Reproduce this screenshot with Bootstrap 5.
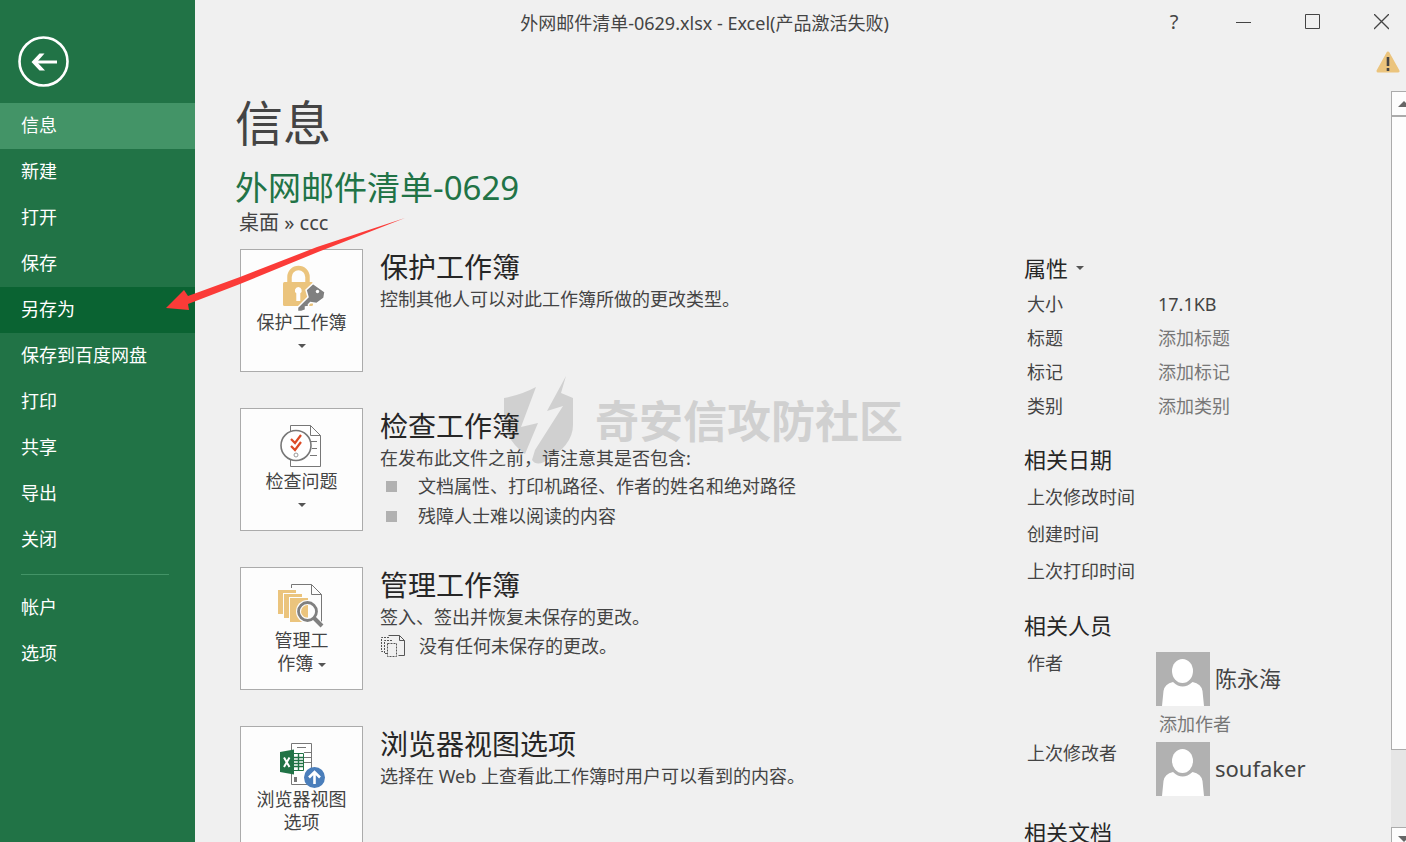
<!DOCTYPE html>
<html lang="zh-CN">
<head>
<meta charset="utf-8">
<meta name="viewport" content="width=device-width, initial-scale=1">
<title>外网邮件清单-0629.xlsx - Excel</title>
<link href="https://cdn.jsdelivr.net/npm/bootstrap@5.3.0/dist/css/bootstrap.min.css" rel="stylesheet">
<style>
body{font-family:"Noto Sans","Noto Sans CJK SC",sans-serif;font-size:18px;line-height:26px;color:#444;background:#f0f0f0}
button{font-family:inherit}
.sidebar{width:195px;background:#217346}
.back-btn{margin:36px 0 16px 18px;width:51px;height:51px}
.side-nav .nav-link{color:#fff;line-height:44px;padding:0 0 2px 21px;border-radius:0}
.side-nav .nav-link.active{background:#439467}
.side-nav .nav-link.hovered{background:#0a6332}
.side-nav hr{margin:11px 26px 10px 21px;border-color:#439467;opacity:1}
.win-title{line-height:46px;padding-left:3px;pointer-events:none}
.win-bar{height:46px;gap:19px}
.win-bar button{width:50px;height:44px;font-size:20px;color:#444}
.warn-bar{height:45px;padding:5px 6px 0 0}
.page-body{padding-left:40px}
h1{font-size:48px;line-height:64px;font-weight:400;color:#444}
.doc-name{font-size:33px;line-height:42px;font-weight:400;color:#217346;margin-top:12px}
.doc-path{font-size:20px;line-height:28px;padding-left:4px;margin-bottom:12px}
.actions{gap:36px;padding-left:5px}
.action{gap:17px;min-height:123px}
.tile{width:123px;height:123px;background:#fdfdfd;border:1px solid #ababab;padding:13px 10px 0;line-height:23px;color:#444}
.action h3{font-size:28px;line-height:37px;font-weight:400;color:#262626}
.bullets li{line-height:30px;gap:21px;padding-left:6px}
.bullets li::before{content:"";width:11px;height:11px;background:#b1b1b1}
.unsaved{line-height:32px;gap:12px}
.props{width:367px}
.props h4,.props .prop-head{font-size:22px;line-height:38px;font-weight:400;color:#262626}
.props h4{margin-top:17px}
.props table{width:100%}
.props th{width:131px;font-weight:400;padding:0 0 0 3px}
.props td{padding:0 0 0 3px}
.size-rows tr{height:34px}
.date-rows tr{height:37px}
.props input{border:0;background:transparent;padding:0;width:180px;height:26px;color:#444}
.props input::placeholder{color:#777;opacity:1}
.person-label{width:132px;padding-left:3px;line-height:22px}
.person-name{font-size:22px;line-height:30px;padding:0 0 2px 5px}
.people{padding-top:8px}
.add-author{height:36px;padding-left:135px}
.scroller{width:15px;background:#e6e6e6}
.scroller button{height:25px;background:#fdfdfd;border:1px solid #ababab;border-right:0;padding:0 0 0 6px}
.scroller .thumb{background:#fdfdfd;border:1px solid #ababab;border-right:0}
.scroller .track{height:77px}
.scroller .down{height:15px;border-bottom:0}
.stamp{left:308px;top:374px;color:#d0d0d0;font-size:44px;line-height:94px;font-weight:700;gap:20px}
.pointer{left:160px;top:212px;pointer-events:none}
</style>
</head>
<body>
<div class="d-flex vh-100 overflow-hidden position-relative">
  <aside class="sidebar flex-shrink-0">
    <button class="back-btn btn p-0 border-0 d-block" type="button" aria-label="返回">
      <svg class="d-block" width="51" height="51" viewBox="0 0 51 51" fill="none" stroke="#fff"><circle cx="25.500" cy="25.500" r="24" stroke-width="2.600"/><path d="M39 26H16" stroke-width="3"/><path d="M21.500 17.500h5L19 26l8 8.500h-5.500L13.500 26z" fill="#fff" stroke="none"/></svg>
    </button>
    <nav class="side-nav nav flex-column">
      <a class="nav-link active" href="#">信息</a>
      <a class="nav-link" href="#">新建</a>
      <a class="nav-link" href="#">打开</a>
      <a class="nav-link" href="#">保存</a>
      <a class="nav-link hovered" href="#">另存为</a>
      <a class="nav-link" href="#">保存到百度网盘</a>
      <a class="nav-link" href="#">打印</a>
      <a class="nav-link" href="#">共享</a>
      <a class="nav-link" href="#">导出</a>
      <a class="nav-link" href="#">关闭</a>
      <hr>
      <a class="nav-link" href="#">帐户</a>
      <a class="nav-link" href="#">选项</a>
    </nav>
  </aside>

  <div class="win-title position-absolute top-0 start-0 w-100 text-center">外网邮件清单-0629.xlsx - Excel(产品激活失败)</div>

  <main class="flex-grow-1 d-flex flex-column position-relative overflow-hidden">
    <div class="stamp position-absolute d-flex text-nowrap">
      <svg width="72" height="94" viewBox="0 0 72 94" fill="#d0d0d0"><path d="M1 24Q18 21 33 13L18 53l17-4-13 31Q1 65 1 41zM63 2L44 37l16-5-28 44-3 10q4 6 12 2Q70 72 70 51V24l-12-5z"/></svg>
      <span>奇安信攻防社区</span>
    </div>
    <div class="win-bar d-flex justify-content-end flex-shrink-0">
      <button class="btn border-0 p-0" type="button" aria-label="帮助">?</button>
      <button class="btn border-0 p-0" type="button" aria-label="最小化"><svg class="d-block mx-auto" width="15" height="16"><path d="M0 8.500h15" stroke="#444"/></svg></button>
      <button class="btn border-0 p-0" type="button" aria-label="最大化"><svg class="d-block mx-auto" width="15" height="16"><path d="M.5.500h14v14H.5z" fill="none" stroke="#444"/></svg></button>
      <button class="btn border-0 p-0" type="button" aria-label="关闭"><svg class="d-block mx-auto" width="15" height="16"><path d="M0 0l15 15M15 0L0 15" fill="none" stroke="#444" stroke-width="1.300"/></svg></button>
    </div>
    <div class="warn-bar d-flex justify-content-end flex-shrink-0">
      <svg width="24" height="22" viewBox="0 0 24 22"><path d="M12 2L22 20H2z" fill="#ebc47d" stroke="#ebc47d" stroke-width="3" stroke-linejoin="round"/><path d="M12 6v9M12 17v3" stroke="#444" stroke-width="2.600"/></svg>
    </div>

    <div class="d-flex flex-grow-1 overflow-hidden">
      <div class="page-body flex-grow-1 overflow-hidden position-relative">
        <h1 class="m-0">信息</h1>
        <h2 class="doc-name mb-0">外网邮件清单-0629</h2>
        <div class="doc-path">桌面 » ccc</div>
        <div class="d-flex">
          <div class="actions flex-grow-1 d-flex flex-column">
            <section class="action d-flex">
              <button class="tile flex-shrink-0 d-flex flex-column align-items-center justify-content-start" type="button">
                <svg class="flex-shrink-0" width="49" height="48" viewBox="0 0 49 48"><path d="M12.500 20v-6a9 9 0 0 1 18 0v6" fill="none" stroke="#ebc47d" stroke-width="4.500"/><rect x="6" y="19" width="30" height="24" rx="1.500" fill="#ebc47d"/><path d="M21.300 24a3.500 3.500 0 0 1 2 6.300V38h-4v-7.700a3.500 3.500 0 0 1 2-6.300z" fill="#fff"/><path d="M36 20.500l12 8.500-1 6-7.500 5.500-6-1-2 2v2l-3 .5v3l-4 1.500h-4v-4L31 34l-2-7z" fill="#808080" stroke="#fff" stroke-width="1.500"/><circle cx="40.500" cy="28.500" r="1.700" fill="#fff"/></svg>
                <span class="text-nowrap">保护工作簿</span>
                <svg class="flex-shrink-0" width="8" height="23"><path d="M0 10h8L4 14z" fill="#555"/></svg>
              </button>
              <div><h3 class="m-0">保护工作簿</h3><div>控制其他人可以对此工作簿所做的更改类型。</div></div>
            </section>
            <section class="action d-flex">
              <button class="tile flex-shrink-0 d-flex flex-column align-items-center justify-content-start" type="button">
                <svg class="flex-shrink-0" width="49" height="48" viewBox="0 0 49 48" fill="none" stroke="#777"><path d="M13.500 3.500h20l10 10v31h-30zM33.500 3.500v10h10" fill="#fff"/><path d="M34 19.500h6M35 26.500h5M33 33.500h7"/><circle cx="19" cy="23.500" r="15" fill="#fff" stroke-width="1.600"/><path d="M14 17l4 4 6-8M14 24l4 4 6-8" stroke="#dc4a26" stroke-width="2.200"/><circle cx="19" cy="33" r="2" stroke="#999"/></svg>
                <span class="text-nowrap">检查问题</span>
                <svg class="flex-shrink-0" width="8" height="23"><path d="M0 10h8L4 14z" fill="#555"/></svg>
              </button>
              <div><h3 class="m-0">检查工作簿</h3><div>在发布此文件之前，请注意其是否包含:</div>
                <ul class="bullets list-unstyled m-0">
                  <li class="d-flex align-items-center">文档属性、打印机路径、作者的姓名和绝对路径</li>
                  <li class="d-flex align-items-center">残障人士难以阅读的内容</li>
                </ul>
              </div>
            </section>
            <section class="action d-flex">
              <button class="tile flex-shrink-0 d-flex flex-column align-items-center justify-content-start" type="button">
                <svg class="flex-shrink-0" width="49" height="48" viewBox="0 0 49 48"><path d="M14.500 7V3.500h20l10 10V42M34.500 3.500v10h10" fill="none" stroke="#777"/><path d="M1 9h18v3H6v21H1zM7 13h18v3H12v21H7zM13 17h18v24H13z" fill="#ebc47d"/><circle cx="30.500" cy="30.500" r="11.500" fill="#fdfdfd"/><path d="M38 38l7 7" stroke="#fdfdfd" stroke-width="6"/><circle cx="30.500" cy="30.500" r="9" fill="#fdfdfd" stroke="#808080" stroke-width="2.800"/><path d="M24 31a6.500 6.500 0 0 1 7-7v12.500A6 6 0 0 1 24 31z" fill="#ebc47d"/><path d="M37 37l8 8" stroke="#808080" stroke-width="4"/></svg>
                <span class="text-nowrap">管理工<br>作簿 <svg width="8" height="8" viewBox="0 0 8 8"><path d="M0 2h8L4 6z" fill="#555"/></svg></span>
              </button>
              <div><h3 class="m-0">管理工作簿</h3><div>签入、签出并恢复未保存的更改。</div>
                <div class="unsaved d-flex align-items-center">
                  <svg width="27" height="24" viewBox="0 0 27 24" fill="none" stroke="#555"><path d="M8.500 1.500h11l5 5v15h-6M19.500 1.500v5h5"/><path d="M9 3.500H1.500v14H4M12 6.500H4.500v13H7M7.500 9.500h9v13h-9z" stroke-dasharray="2 1"/></svg>
                  <span>没有任何未保存的更改。</span>
                </div>
              </div>
            </section>
            <section class="action d-flex">
              <button class="tile flex-shrink-0 d-flex flex-column align-items-center justify-content-start" type="button">
                <svg class="flex-shrink-0" width="49" height="48" viewBox="0 0 49 48"><path d="M14.500 3.500h20v41h-20zM20 7.500h9M27 12.500h7M27 17.500h7M27 22.500h7" fill="#fff" stroke="#777"/><path d="M17 37h3v5h-3z" fill="#777"/><path d="M16 13.500h10.500v17H16z" fill="#fff" stroke="#217346"/><path d="M16 17.500h10M16 20.500h10M16 23.500h10M16 26.500h10M21.500 14v16" stroke="#217346" stroke-width="1.400"/><path d="M3 12l14-2.500v25L3 32z" fill="#217346"/><path d="M7 17.500l5.500 9.500M12.500 17.500L7 27" stroke="#fff" stroke-width="2"/><circle cx="37.500" cy="37.500" r="10.500" fill="#4a7ebb"/><path d="M37.500 44V33M32 37.500l5.500-5.500 5.500 5.500" fill="none" stroke="#fff" stroke-width="2.600"/></svg>
                <span class="text-nowrap">浏览器视图<br>选项</span>
              </button>
              <div><h3 class="m-0">浏览器视图选项</h3><div>选择在 Web 上查看此工作簿时用户可以看到的内容。</div></div>
            </section>
          </div>

          <div class="props flex-shrink-0">
            <button class="prop-head d-flex align-items-center gap-2 btn border-0 p-0" type="button">属性<svg width="8" height="8"><path d="M0 2h8L4 6z" fill="#555"/></svg></button>
            <table class="size-rows">
              <tr><th scope="row">大小</th><td>17.1KB</td></tr>
              <tr><th scope="row"><label for="p-title">标题</label></th><td><input id="p-title" placeholder="添加标题"></td></tr>
              <tr><th scope="row"><label for="p-tag">标记</label></th><td><input id="p-tag" placeholder="添加标记"></td></tr>
              <tr><th scope="row"><label for="p-cat">类别</label></th><td><input id="p-cat" placeholder="添加类别"></td></tr>
            </table>
            <h4 class="mb-0">相关日期</h4>
            <table class="date-rows">
              <tr><th scope="row">上次修改时间</th><td></td></tr>
              <tr><th scope="row">创建时间</th><td></td></tr>
              <tr><th scope="row">上次打印时间</th><td></td></tr>
            </table>
            <h4 class="mb-0">相关人员</h4>
            <div class="people d-flex">
              <label class="person-label" for="p-author">作者</label>
              <svg width="54" height="54" viewBox="0 0 54 54"><path d="M0 0h54v54H0z" fill="#b1b1b1"/><ellipse cx="26.500" cy="19" rx="10.500" ry="12" fill="#fff"/><path d="M6 54l1.500-15q1-7 9.500-9 9.500 9 19.500 0 9 2 10 9L48 54z" fill="#fff"/></svg>
              <span class="person-name align-self-center">陈永海</span>
            </div>
            <div class="add-author d-flex align-items-center"><input id="p-author" placeholder="添加作者"></div>
            <div class="d-flex">
              <span class="person-label">上次修改者</span>
              <svg width="54" height="54" viewBox="0 0 54 54"><path d="M0 0h54v54H0z" fill="#b1b1b1"/><ellipse cx="26.500" cy="19" rx="10.500" ry="12" fill="#fff"/><path d="M6 54l1.500-15q1-7 9.500-9 9.500 9 19.500 0 9 2 10 9L48 54z" fill="#fff"/></svg>
              <span class="person-name align-self-center">soufaker</span>
            </div>
            <h4 class="mb-0">相关文档</h4>
          </div>
        </div>
      </div>
      <div class="scroller flex-shrink-0 d-flex flex-column overflow-hidden">
        <button class="d-flex align-items-center" type="button" aria-label="向上滚动"><svg class="flex-shrink-0" width="12" height="6"><path d="M0 6L6 0l6 6z" fill="#666"/></svg></button>
        <div class="thumb flex-grow-1"></div>
        <div class="track flex-shrink-0"></div>
        <button class="down flex-shrink-0 d-flex align-items-end" type="button" aria-label="向下滚动"><svg class="flex-shrink-0" width="12" height="6"><path d="M0 0h12L6 6z" fill="#666"/></svg></button>
      </div>
    </div>
  </main>

  <svg class="pointer position-absolute" width="250" height="102" viewBox="160 212 250 102"><path d="M166 308l18-18 4 6 52-19 77-30 88-29-87 34-78 32-52 20 1 6z" fill="#fb3b38"/></svg>
</div>
<script src="https://cdn.jsdelivr.net/npm/bootstrap@5.3.0/dist/js/bootstrap.bundle.min.js"></script>
</body>
</html>
